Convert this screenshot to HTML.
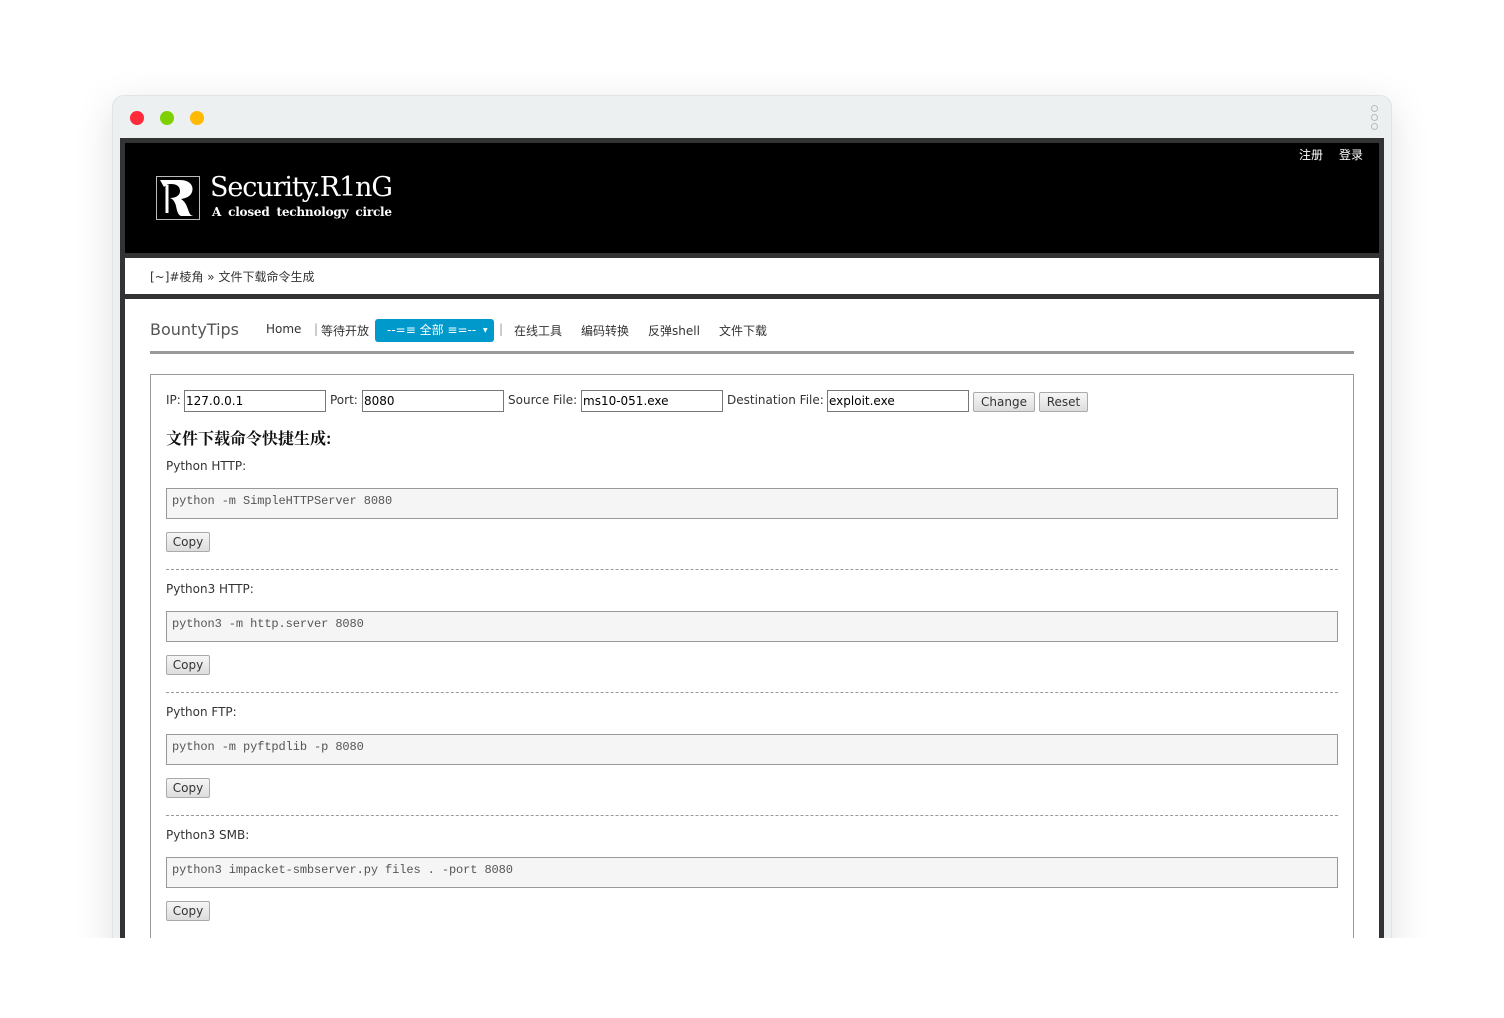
<!DOCTYPE html>
<html><head><meta charset="utf-8"><style>
*{margin:0;padding:0;box-sizing:border-box}
body{width:1504px;height:1018px;background:#fff;position:relative;overflow:hidden;font-family:"DejaVu Sans","Liberation Sans","Noto Sans CJK SC",sans-serif;font-size:12px;color:#333}
.win{position:absolute;left:112px;top:95px;width:1280px;height:900px;background:#ecf0f0;border-radius:12px 12px 0 0;box-shadow:0 10px 40px rgba(0,0,0,.12);border:1px solid #e0e4e4}
.dot{position:absolute;top:15px;width:14px;height:14px;border-radius:50%}
.sd{position:absolute;left:1258px;width:7px;height:7px;border:1px solid #bbb;border-radius:50%}
.cut{position:absolute;left:0;top:938px;width:1504px;height:80px;background:#fff}
.frame{position:absolute;left:120px;top:138px;width:1264px;height:800px;background:#333}
.hdr{position:absolute;left:125px;top:143px;width:1254px;height:110px;background:#000}
.bc{position:absolute;left:125px;top:258px;width:1254px;height:36px;background:#fff;padding:10px 0 0 25px;font-size:12px;font-family:"DejaVu Sans","Noto Sans CJK SC",sans-serif;color:#333}
.main{position:absolute;left:125px;top:299px;width:1254px;height:639px;background:#fff}
.nav{position:absolute;left:25px;top:20px;width:1204px;height:35px;border-bottom:3px solid #999}
.nav span{position:absolute;top:3px;font-size:12px;color:#333;font-family:"DejaVu Sans","Noto Sans CJK SC",sans-serif}
.box{position:absolute;left:25px;top:75px;width:1204px;height:600px;border:1px solid #999}
input{position:absolute;top:15px;height:22px;border:1px solid #777;font:12px "DejaVu Sans",sans-serif;padding-left:1px;color:#000}
.lbl{position:absolute;top:18px;font-size:12px}
.btn{position:absolute;height:20px;border:1px solid #aaa;background:linear-gradient(#f6f6f6,#ddd);font-size:12px;color:#333;text-align:center;line-height:18px;border-radius:2px}
.code{position:absolute;left:15px;width:1172px;height:31px;border:1px solid #999;background:#f5f5f5;font-family:"Liberation Mono",monospace;font-size:12px;color:#555;padding:5px 0 0 5px;letter-spacing:-0.1px}
.t{position:absolute;left:15px;font-size:12px}
.hr{position:absolute;left:15px;width:1172px;border-top:1px dashed #999}
</style></head><body>
<div class="win">
<div class="dot" style="left:17px;background:#ff2a3a"></div>
<div class="dot" style="left:47px;background:#7ed000"></div>
<div class="dot" style="left:77px;background:#ffb900"></div>
<div class="sd" style="top:9px"></div><div class="sd" style="top:18px"></div><div class="sd" style="top:27px"></div>
</div>
<div class="frame"></div>
<div class="hdr">
<div style="position:absolute;left:31px;top:33px;width:44px;height:44px;border:1px solid #bbb;background:#000">
<svg width="42" height="42" viewBox="0 0 42 42"><path d="M3 3h20c10 0 14 6 12 12-2 5-6 6-11 7 5 3 6 8 8 13 1 3 3 4 5 4H24c-3-1-4-5-5-10-1-4-3-7-6-8 5 0 10-2 10-7S19 7 14 7c-3 0-5 1-7 3z" fill="#fff"/><path d="M10 8v28" stroke="#fff" stroke-width="3"/></svg></div>
<div style="position:absolute;left:85px;top:29px;font:27px 'DejaVu Serif','Liberation Serif',serif;color:#fff;letter-spacing:-1.1px">Security.R1nG</div>
<div style="position:absolute;left:87px;top:62px;font:bold 12px 'DejaVu Serif','Liberation Serif',serif;color:#fff;word-spacing:3px;letter-spacing:-0.2px">A closed technology circle</div>
<div style="position:absolute;left:1174px;top:3px;font:12px 'Noto Sans CJK SC',sans-serif;color:#fff">注册</div>
<div style="position:absolute;left:1214px;top:3px;font:12px 'Noto Sans CJK SC',sans-serif;color:#fff">登录</div>
</div>
<div class="bc">[~]#棱角 » 文件下载命令生成</div>
<div class="main">
<div class="nav">
<span style="left:0;top:1px;font-size:16px;color:#555">BountyTips</span>
<span style="left:116px">Home</span>
<span style="left:164px;color:#999">|</span>
<span style="left:171px">等待开放</span>
<div style="position:absolute;left:225px;top:0;width:119px;height:23px;background:#0099cc;border-radius:3px;color:#fff;font-size:12px;line-height:22px;padding-left:12px">--=≡ 全部 ≡=-- <span style="position:absolute;left:108px;top:1px;font-size:6px;color:#fff">▼</span></div>
<span style="left:349px;color:#999">|</span>
<span style="left:364px">在线工具</span>
<span style="left:431px">编码转换</span>
<span style="left:498px">反弹shell</span>
<span style="left:569px">文件下载</span>
</div>
<div class="box">
<span class="lbl" style="left:15px">IP:</span><input style="left:33px;width:142px" value="127.0.0.1">
<span class="lbl" style="left:179px">Port:</span><input style="left:211px;width:142px" value="8080">
<span class="lbl" style="left:357px">Source File:</span><input style="left:430px;width:142px" value="ms10-051.exe">
<span class="lbl" style="left:576px">Destination File:</span><input style="left:676px;width:142px" value="exploit.exe">
<div class="btn" style="left:822px;top:17px;width:62px">Change</div>
<div class="btn" style="left:888px;top:17px;width:49px">Reset</div>
<div style="position:absolute;left:15px;top:51px;font:bold 16px 'Noto Serif CJK SC','Noto Sans CJK SC',serif;color:#111">文件下载命令快捷生成:</div>
<div class="t" style="top:84px">Python HTTP:</div>
<div class="code" style="top:113px">python -m SimpleHTTPServer 8080</div>
<div class="btn" style="left:15px;top:157px;width:44px">Copy</div>
<div class="hr" style="top:194px"></div>
<div class="t" style="top:207px">Python3 HTTP:</div>
<div class="code" style="top:236px">python3 -m http.server 8080</div>
<div class="btn" style="left:15px;top:280px;width:44px">Copy</div>
<div class="hr" style="top:317px"></div>
<div class="t" style="top:330px">Python FTP:</div>
<div class="code" style="top:359px">python -m pyftpdlib -p 8080</div>
<div class="btn" style="left:15px;top:403px;width:44px">Copy</div>
<div class="hr" style="top:440px"></div>
<div class="t" style="top:453px">Python3 SMB:</div>
<div class="code" style="top:482px">python3 impacket-smbserver.py files . -port 8080</div>
<div class="btn" style="left:15px;top:526px;width:44px">Copy</div>
</div>
</div>
<div class="cut"></div>
</body></html>
